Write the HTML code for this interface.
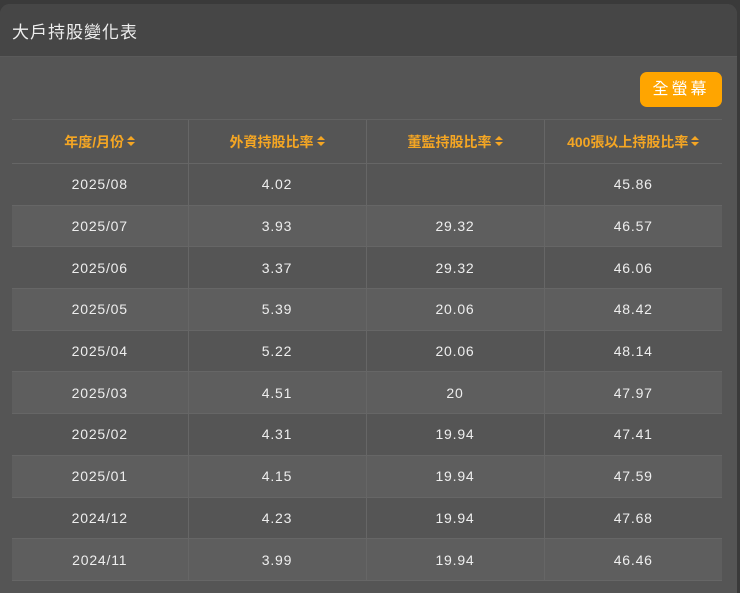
<!DOCTYPE html>
<html><head><meta charset="utf-8"><style>
*{margin:0;padding:0;box-sizing:border-box}
html,body{width:740px;height:593px;background:#3a3a3a;overflow:hidden;font-family:"Liberation Sans","Noto Sans CJK TC",sans-serif}
.card{position:absolute;left:0;top:4px;width:737px;height:589px;background:#555;border-radius:10px 10px 0 0;overflow:hidden}
.hd{height:53px;background:#464646;border-bottom:1px solid #5a5a5a;color:#eee;font-size:17px;padding:14px 0 0 12px;letter-spacing:1px}
.btn{position:absolute;left:640px;top:68px;width:82px;height:35px;background:#ffa500;border-radius:7px;color:#fff;font-size:16px;text-align:center;line-height:35px;letter-spacing:3px}
table{position:absolute;left:12px;top:115px;width:710px;border-collapse:collapse;table-layout:fixed}
th,td{border-top:1px solid #666;border-bottom:1px solid #666;text-align:center}
th+th,td+td{border-left:1px solid #666}
th{height:44px;color:#f5a623;font-size:14px;font-weight:bold;border-top:1px solid #626262}
td{height:41.7px;color:#eee;font-size:14px;letter-spacing:.8px}
tr.e td{background:#5e5e5e}
.s{display:inline-block;width:8px;vertical-align:middle;margin-left:3px;position:relative;top:-2px}
</style></head><body>
<div class="card">
<div class="hd">大戶持股變化表</div>
<div class="btn">全螢幕</div>
<table>
<colgroup><col style="width:176px"><col style="width:178px"><col style="width:178px"><col style="width:178px"></colgroup>
<tr><th>年度/月份<svg class="s" viewBox="0 0 8 12"><path d="M0 5L4 1L8 5Z M0 7L4 11L8 7Z" fill="#f5a623"/></svg></th><th>外資持股比率<svg class="s" viewBox="0 0 8 12"><path d="M0 5L4 1L8 5Z M0 7L4 11L8 7Z" fill="#f5a623"/></svg></th><th>董監持股比率<svg class="s" viewBox="0 0 8 12"><path d="M0 5L4 1L8 5Z M0 7L4 11L8 7Z" fill="#f5a623"/></svg></th><th>400張以上持股比率<svg class="s" viewBox="0 0 8 12"><path d="M0 5L4 1L8 5Z M0 7L4 11L8 7Z" fill="#f5a623"/></svg></th></tr>
<tr><td>2025/08</td><td>4.02</td><td></td><td>45.86</td></tr>
<tr class="e"><td>2025/07</td><td>3.93</td><td>29.32</td><td>46.57</td></tr>
<tr><td>2025/06</td><td>3.37</td><td>29.32</td><td>46.06</td></tr>
<tr class="e"><td>2025/05</td><td>5.39</td><td>20.06</td><td>48.42</td></tr>
<tr><td>2025/04</td><td>5.22</td><td>20.06</td><td>48.14</td></tr>
<tr class="e"><td>2025/03</td><td>4.51</td><td>20</td><td>47.97</td></tr>
<tr><td>2025/02</td><td>4.31</td><td>19.94</td><td>47.41</td></tr>
<tr class="e"><td>2025/01</td><td>4.15</td><td>19.94</td><td>47.59</td></tr>
<tr><td>2024/12</td><td>4.23</td><td>19.94</td><td>47.68</td></tr>
<tr class="e"><td>2024/11</td><td>3.99</td><td>19.94</td><td>46.46</td></tr>
</table>
</div>
</body></html>
